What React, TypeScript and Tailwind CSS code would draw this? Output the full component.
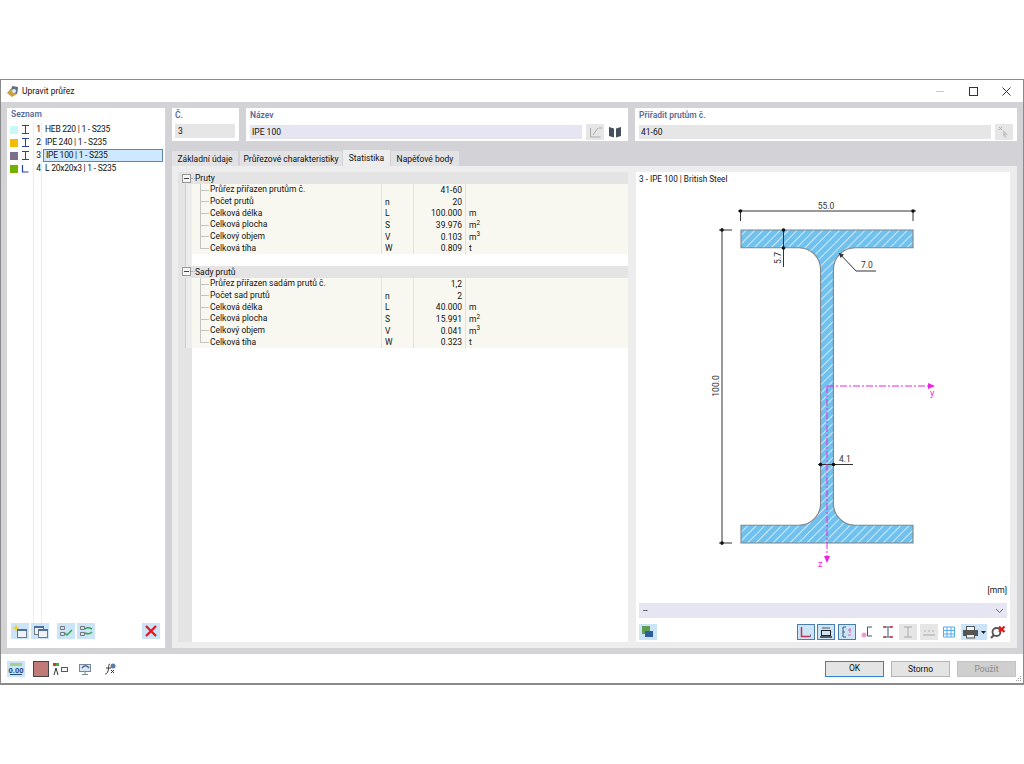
import React from 'react';

const font = { fontFamily: 'Roboto, "Open Sans", sans-serif' };

type Row = { label: string; sym: string; value: string; unit?: React.ReactNode };

const pruty: Row[] = [
  { label: 'Průřez přiřazen prutům č.', sym: '', value: '41-60' },
  { label: 'Počet prutů', sym: 'n', value: '20' },
  { label: 'Celková délka', sym: 'L', value: '100.000', unit: 'm' },
  { label: 'Celková plocha', sym: 'S', value: '39.976', unit: <>m<sup>2</sup></> },
  { label: 'Celkový objem', sym: 'V', value: '0.103', unit: <>m<sup>3</sup></> },
  { label: 'Celková tíha', sym: 'W', value: '0.809', unit: 't' },
];

const sady: Row[] = [
  { label: 'Průřez přiřazen sadám prutů č.', sym: '', value: '1,2' },
  { label: 'Počet sad prutů', sym: 'n', value: '2' },
  { label: 'Celková délka', sym: 'L', value: '40.000', unit: 'm' },
  { label: 'Celková plocha', sym: 'S', value: '15.991', unit: <>m<sup>2</sup></> },
  { label: 'Celkový objem', sym: 'V', value: '0.041', unit: <>m<sup>3</sup></> },
  { label: 'Celková tíha', sym: 'W', value: '0.323', unit: 't' },
];

const sections = [
  { color: 'bg-[#c8f8f8]', type: 'I', n: 1, name: 'HEB 220 | 1 - S235' },
  { color: 'bg-[#f5bb00]', type: 'I', n: 2, name: 'IPE 240 | 1 - S235' },
  { color: 'bg-[#7d6e8c]', type: 'I', n: 3, name: 'IPE 100 | 1 - S235' },
  { color: 'bg-[#74b000]', type: 'L', n: 4, name: 'L 20x20x3 | 1 - S235' },
];

const Glyph = ({ children, w = 18, h = 16 }: { children?: React.ReactNode; w?: number; h?: number }) => (
  <svg width={w} height={h} viewBox={`0 0 ${w} ${h}`} fill="none">{children}</svg>
);

const Btn = ({ children, className = 'bg-[#cce4f7]' }: { children?: React.ReactNode; className?: string }) => (
  <div className={`w-[18px] h-[16px] shrink-0 flex items-center justify-center ${className}`}>{children}</div>
);

const Win = ({ x, y }: { x: number; y: number }) => (
  <>
    <rect x={x + 0.5} y={y + 0.5} width="9" height="8" fill="#eef2f6" stroke="#6f7a86" />
    <rect x={x} y={y} width="10" height="2" fill="#4d6f9c" />
  </>
);

const GroupHeader = ({ title }: { title: string }) => (
  <div className="h-[12px] bg-[#e4e4e4] flex items-center text-[8.5px] leading-none text-[#111]">
    <div className="w-[4px]" />
    <svg width="9" height="9" viewBox="0 0 9 9" className="shrink-0">
      <rect x="0.5" y="0.5" width="8" height="8" fill="#f5f5f5" stroke="#999" />
      <path d="M2 4.5h5" stroke="#444" />
    </svg>
    <div className="w-[4px] border-t border-dotted border-[#aaa]" />
    <span>{title}</span>
  </div>
);

const Rows = ({ rows }: { rows: Row[] }) => (
  <div className="flex">
    <div className="w-[14px] shrink-0 flex">
      <div className="w-[8px] bg-[#e4e4e4] border-r border-[#cfcfcf]" />
      <div className="w-[6px] bg-[#ececec]" />
    </div>
    <div className="flex-1">
      {rows.map((r, i) => (
        <div key={r.label} className="h-[11.67px] flex bg-[#f8f8f1] text-[8.5px] leading-[13px] text-[#111]">
          <div className="w-[190px] shrink-0 flex items-center border-r border-[#e2e2da]">
            <div className="relative w-[18px] h-full shrink-0">
              <div className={`absolute left-[8px] top-0 border-l border-[#c4c4c4] ${i === rows.length - 1 ? 'h-1/2' : 'h-full'}`} />
              <div className="absolute left-[8px] top-1/2 w-[9px] border-t border-[#c4c4c4]" />
            </div>
            <span className="whitespace-nowrap">{r.label}</span>
          </div>
          <div className="w-[32px] shrink-0 pl-[3px] border-r border-[#e2e2da]">{r.sym}</div>
          <div className="w-[52px] shrink-0 text-right pr-[3px] border-r border-[#e2e2da]">{r.value}</div>
          <div className="flex-1 pl-[3px] whitespace-nowrap">{r.unit}</div>
        </div>
      ))}
    </div>
  </div>
);

const Dot = ({ x, y }: { x: number; y: number }) => <circle cx={x} cy={y} r="1.8" fill="#111" />;

const Drawing = () => {
  const outline =
    'M741 230H913V247.8H855.3A21.9 21.9 0 0 0 833.4 269.7V503.3A21.9 21.9 0 0 0 855.3 525.2H913V543H741V525.2H798.7A21.9 21.9 0 0 0 820.6 503.3V269.7A21.9 21.9 0 0 0 798.7 247.8H741Z';
  return (
    <svg width="374" height="410" viewBox="636 186 374 410" fill="none" className="shrink-0">
      <defs>
        <pattern id="hatch" width="6" height="6" patternUnits="userSpaceOnUse" patternTransform="rotate(45)">
          <rect width="6" height="6" fill="#70c1ee" />
          <rect width="1" height="6" fill="#cfeafa" />
        </pattern>
      </defs>
      <path d={outline} fill="url(#hatch)" stroke="#7f8488" strokeWidth="1.1" />
      <g stroke="#333" strokeWidth="1">
        <path d="M738 211H916M740.5 211V221M913 211V221" />
        <path d="M722 228V545M719 230H732M719 543H732" />
        <path d="M783.5 230V267" />
        <path d="M839 253L856 271H876" />
        <path d="M818 464.5H853" />
      </g>
      <path d="M839 253l5 1.5-3.5 3.5z" fill="#333" />
      <Dot x={740.5} y={211} />
      <Dot x={913} y={211} />
      <Dot x={722} y={230} />
      <Dot x={722} y={543} />
      <Dot x={783.5} y={230} />
      <Dot x={783.5} y={248} />
      <Dot x={820.5} y={464.5} />
      <Dot x={833.5} y={464.5} />
      <g stroke="#f020e0" strokeWidth="1" strokeDasharray="7 2 2 2">
        <path d="M827 386H928" />
        <path d="M827 386V556" />
      </g>
      <path d="M935 386l-7-3v6zM827 563l-3-7h6z" fill="#f020e0" />
      <g fill="#333" fontSize="8.5" style={font}>
        <text x="826" y="209" textAnchor="middle">55.0</text>
        <text x="867" y="268" textAnchor="middle">7.0</text>
        <text x="845" y="462" textAnchor="middle">4.1</text>
        <text transform="translate(719 386) rotate(-90)" textAnchor="middle">100.0</text>
        <text transform="translate(781 258) rotate(-90)" textAnchor="middle">5.7</text>
      </g>
      <g fill="#f020e0" fontSize="9" style={font}>
        <text x="930" y="396">y</text>
        <text x="818" y="567">z</text>
      </g>
    </svg>
  );
};

const App: React.FC = () => {
  return (
    <div className="w-[1024px] h-[764px] bg-white pt-[79px] overflow-hidden" style={font}>
      <div className="h-[606px] border border-b-2 border-[#8a8a8a] flex flex-col">
        {/* Title bar */}
        <div className="h-[22px] shrink-0 flex items-center bg-white">
          <svg width="13" height="13" viewBox="0 0 13 13" className="ml-[5px]">
            <path d="M1 8L6 2l6 1-1 6-5 3z" fill="#c9a23a" />
            <path d="M6 1l6 1-1 7-5-2z" fill="#5f6f86" />
            <circle cx="8" cy="6" r="2" fill="#e8edf3" />
          </svg>
          <span className="ml-[3px] text-[8.5px] text-[#111]">Upravit průřez</span>
          <div className="flex-1" />
          <div className="w-[93px] flex items-center">
            <div className="w-[8px] ml-[6px] border-t border-[#c8c8c8]" />
            <div className="w-[9px] h-[9px] ml-[25px] border border-[#333]" />
            <svg width="9" height="9" viewBox="0 0 9 9" className="ml-[24px]">
              <path d="M0.5 0.5l8 8M8.5 0.5l-8 8" stroke="#333" />
            </svg>
          </div>
        </div>

        {/* Body */}
        <div className="h-[552px] shrink-0 bg-[#d2d2d7] flex gap-[7px] pl-[6px] pr-[6px] py-[6px]">
          {/* Seznam */}
          <div className="w-[158px] shrink-0 bg-white flex flex-col text-[8.5px] leading-[13px] text-[#111]">
            <div className="h-[15px] shrink-0 pl-[4px] font-semibold text-[#5a6b98] text-[8.5px]">Seznam</div>
            <div className="h-[500px] shrink-0 flex">
              <div className="w-[26px] shrink-0 pl-[3px]">
                {sections.map(s => (
                  <div key={s.n} className="h-[13px] flex items-center">
                    <div className={`w-[8px] h-[8px] ${s.color}`} />
                    <svg width="12" height="9" viewBox="0 0 12 9" fill="none" className="ml-[2px]">
                      {s.type === 'I' ? (
                        <path d="M2 0.5h7M5.500 0.5v8M2 8.500h7" stroke="#2840a8" />
                      ) : (
                        <path d="M2.500 1v7h6" stroke="#2840a8" strokeWidth="1.200" />
                      )}
                    </svg>
                  </div>
                ))}
              </div>
              <div className="w-[9px] shrink-0 border-x border-[#ececec] text-right">
                {sections.map(s => (
                  <div key={s.n} className="h-[13px]">{s.n}</div>
                ))}
              </div>
              <div className="flex-1 pl-[1px] pr-[2px] tracking-[-0.25px]">
                {sections.map(s => (
                  <div
                    key={s.n}
                    className={`h-[13px] pl-[2px] whitespace-nowrap ${s.n === 3 ? 'bg-[#cde8ff] border border-[#5b87a8] leading-[11px] pl-[1px]' : ''}`}
                  >
                    {s.name}
                  </div>
                ))}
              </div>
            </div>
            <div className="flex pl-[4px] pr-[5px] items-center">
              <Btn>
                <Glyph>
                  <Win x={6} y={6} />
                  <path d="M5 1l1 3 3 1-3 1-1 3-1-3-3-1 3-1z" fill="#f2d021" />
                </Glyph>
              </Btn>
              <div className="w-[2px]" />
              <Btn>
                <Glyph><Win x={3} y={3} /><Win x={7} y={6} /></Glyph>
              </Btn>
              <div className="w-[8px]" />
              <Btn>
                <Glyph>
                  <path d="M3.500 3.500h4v3h-4zM3.500 9.500h4v3h-4z" stroke="#777" />
                  <path d="M8 10l2 2 5-5" stroke="#2fa84f" strokeWidth="1.500" />
                </Glyph>
              </Btn>
              <div className="w-[2px]" />
              <Btn>
                <Glyph>
                  <path d="M3.500 3.500h4v3h-4zM3.500 9.500h4v3h-4z" stroke="#777" />
                  <path d="M8 6c2-2 5-1 7 0M8 10c2 1 5 1 7-1" stroke="#2fa84f" strokeWidth="1.500" />
                </Glyph>
              </Btn>
              <div className="flex-1" />
              <Btn>
                <Glyph><path d="M4 3l10 10M14 3L4 13" stroke="#e8141c" strokeWidth="2.200" /></Glyph>
              </Btn>
            </div>
          </div>

          {/* Main column */}
          <div className="flex-1 flex flex-col min-w-0">
            <div className="h-[33px] shrink-0 flex gap-[7px] text-[8.5px] text-[#111]">
              <div className="w-[67px] bg-white px-[3px] flex flex-col">
                <div className="h-[16px] pt-[1px] leading-[12px] font-semibold text-[#5a6b98]">Č.</div>
                <div className="w-[60px] h-[14px] bg-[#e6e6e6] pl-[3px] leading-[14px]">3</div>
              </div>
              <div className="w-[382px] bg-white px-[4px] flex flex-col">
                <div className="h-[16px] pt-[1px] leading-[12px] font-semibold text-[#5a6b98]">Název</div>
                <div className="flex items-center">
                  <div className="w-[332px] h-[14px] bg-[#e6e6f2] pl-[2px] leading-[14px]">IPE 100</div>
                  <Btn className="ml-[4px] bg-[#e6e6e6] h-[15px]">
                    <Glyph>
                      <path d="M4.500 4v9h10" stroke="#a8a8a8" />
                      <path d="M7 11l5-7M13 4h3" stroke="#a8a8a8" />
                    </Glyph>
                  </Btn>
                  <Btn className="ml-[2px] h-[15px]">
                    <Glyph><path d="M3 3l5 1.500v9L3 12zM15 3l-5 1.500v9l5-1.500z" fill="#44505c" /></Glyph>
                  </Btn>
                </div>
              </div>
              <div className="w-[382px] bg-white px-[4px] flex flex-col">
                <div className="h-[16px] pt-[1px] leading-[12px] font-semibold text-[#5a6b98]">Přiřadit prutům č.</div>
                <div className="flex items-center">
                  <div className="w-[352px] h-[14px] bg-[#e6e6e6] pl-[2px] leading-[14px]">41-60</div>
                  <Btn className="ml-[4px] bg-[#e6e6e6] h-[15px]">
                    <Glyph>
                      <path d="M8 6l5 5-2.500 0 1 2.500-1.500 .5-1-2.500L8 13z" fill="#c4c4c4" />
                      <path d="M4 3l3 3M7 3L4 6" stroke="#aaa" />
                    </Glyph>
                  </Btn>
                </div>
              </div>
            </div>

            {/* Tabs */}
            <div className="h-[16px] mt-[9px] shrink-0 flex items-end text-[8.5px] text-[#111] whitespace-nowrap">
              <div className="w-[66px] h-[15px] bg-[#e2e2e4] text-center leading-[16px]">Základní údaje</div>
              <div className="w-[102px] h-[15px] ml-[2px] bg-[#e2e2e4] text-center leading-[16px]">Průřezové charakteristiky</div>
              <div className="w-[47px] h-[16px] ml-[1px] bg-[#ededed] text-center leading-[17px]">Statistika</div>
              <div className="w-[68px] h-[15px] ml-[1px] bg-[#e2e2e4] text-center leading-[16px]">Napěťové body</div>
            </div>

            <div className="flex-1 bg-[#ededed] p-[6px] flex gap-[8px] min-h-0">
              {/* Tree table */}
              <div className="w-[450px] shrink-0 bg-white flex flex-col">
                <GroupHeader title="Pruty" />
                <Rows rows={pruty} />
                <div className="h-[12px] shrink-0 flex">
                  <div className="w-[8px] bg-[#e4e4e4] border-r border-[#cfcfcf]" />
                  <div className="w-[6px] bg-[#ececec]" />
                </div>
                <GroupHeader title="Sady prutů" />
                <Rows rows={sady} />
                <div className="flex-1 flex">
                  <div className="w-[14px] bg-[#e4e4e4]" />
                </div>
              </div>

              {/* Cross-section preview */}
              <div className="w-[374px] shrink-0 bg-white flex flex-col text-[8.5px] text-[#111]">
                <div className="h-[14px] shrink-0 pl-[3px] leading-[15px] text-[8.2px]">3 - IPE 100 | British Steel</div>
                <div className="h-[410px] shrink-0 relative">
                  <Drawing />
                  <span className="absolute right-[3px] bottom-0 leading-[12px] text-[8.5px]">[mm]</span>
                </div>
                <div className="mx-[3px] mt-[7px] h-[15px] shrink-0 bg-[#e6e6f2] flex items-center justify-between pl-[4px] pr-[3px]">
                  <span>--</span>
                  <svg width="9" height="6" viewBox="0 0 9 6"><path d="M1 1l3.500 3.500L8 1" stroke="#666" fill="none" /></svg>
                </div>
                <div className="mx-[3px] mt-[6px] flex items-center">
                  <Btn>
                    <Glyph>
                      <rect x="3" y="2" width="8" height="8" fill="#5f9e52" />
                      <rect x="6" y="7" width="8" height="6" fill="#2d5f9c" />
                    </Glyph>
                  </Btn>
                  <div className="flex-1" />
                  <Btn className="bg-[#cce4f7] border border-[#4a7ea8]">
                    <Glyph w={16} h={14}><path d="M3.500 2v9.500h9" stroke="#c8344c" strokeWidth="1.500" /><path d="M12.500 9.500v2" stroke="#5a6a9a" /></Glyph>
                  </Btn>
                  <Btn className="ml-[2px] bg-[#cce4f7] border border-[#4a7ea8]">
                    <Glyph w={16} h={14}>
                      <rect x="3.500" y="5.500" width="9" height="5" stroke="#222" />
                      <path d="M5 2v2M7 2v2M9 2v2M11 2v2" stroke="#555" />
                      <path d="M2 12h12" stroke="#222" strokeWidth="1.400" />
                    </Glyph>
                  </Btn>
                  <Btn className="ml-[3px] bg-[#cce4f7] border border-[#4a7ea8]">
                    <Glyph w={16} h={14}><path d="M7 2H4v10h3M4 7h2" stroke="#3a5878" /><path d="M9 5h3M11 3v5M9 10h3" stroke="#d070b0" /></Glyph>
                  </Btn>
                  <Btn className="ml-[3px]">
                    <Glyph><path d="M13 3H8.500v9H13" stroke="#3a5878" /><circle cx="5" cy="11" r="2.500" fill="#e4a0d0" /></Glyph>
                  </Btn>
                  <Btn className="ml-[2px]">
                    <Glyph><path d="M5 3h8M9 3v10M5 13h8" stroke="#3a5878" /><path d="M4 3h3M11 3h3M4 13h3M11 13h3" stroke="#d8344c" strokeWidth="1.400" /></Glyph>
                  </Btn>
                  <Btn className="ml-[2px] bg-[#e6e6e6]">
                    <Glyph><path d="M5 3h8M9 3v10M5 13h8" stroke="#a8a8a8" /></Glyph>
                  </Btn>
                  <Btn className="ml-[3px] bg-[#e6e6e6]">
                    <Glyph><path d="M3 11h12" stroke="#a8a8a8" /><path d="M5 6v2M9 6v2M13 6v2" stroke="#b0b0b0" /></Glyph>
                  </Btn>
                  <Btn className="ml-[2px]">
                    <Glyph><path d="M3.500 3h11v10h-11zM7 3v10M11 3v10M3.500 6.500h11M3.500 10h11" stroke="#58a8ec" /></Glyph>
                  </Btn>
                  <div className="ml-[3px] w-[26px] h-[16px] bg-[#cce4f7] flex items-center">
                    <svg width="26" height="16" viewBox="0 0 26 16" fill="none">
                      <rect x="5.500" y="2.500" width="8" height="4" fill="#f4f4f4" stroke="#555" />
                      <rect x="2" y="6" width="15" height="6" fill="#555" />
                      <rect x="5.500" y="10.500" width="8" height="3.500" fill="#eee" stroke="#555" />
                      <path d="M20 7h5l-2.500 3z" fill="#222" />
                    </svg>
                  </div>
                  <Btn className="ml-[2px]">
                    <Glyph>
                      <circle cx="7.500" cy="8" r="4" stroke="#555" strokeWidth="1.800" />
                      <path d="M5 11l-3 3" stroke="#555" strokeWidth="2.200" />
                      <path d="M10 2.500l5.500 5.500M15.500 2.500L10 8" stroke="#e8141c" strokeWidth="2.200" />
                    </Glyph>
                  </Btn>
                </div>
              </div>
            </div>
          </div>
        </div>

        {/* Footer */}
        <div className="relative flex-1 bg-white flex items-center pl-[6px] pr-[7px] text-[8.5px] text-[#111]">
          <Btn>
            <Glyph>
              <rect x="3" y="2" width="12" height="3" fill="#a4d08c" />
              <text x="9" y="12" textAnchor="middle" fontSize="7.500" fontWeight="700" fill="#2a4a7c">0.00</text>
              <path d="M3 13.500h12" stroke="#2a4a7c" />
            </Glyph>
          </Btn>
          <div className="ml-[8px] w-[16px] h-[16px] bg-[#c07a78] border border-[#444]" />
          <Btn className="ml-[2px]">
            <Glyph>
              <rect x="2" y="2" width="3" height="3" fill="#e03030" /><rect x="5" y="2" width="3" height="3" fill="#40b040" />
              <path d="M3 14l2-7 2 7" stroke="#333" /><rect x="10.500" y="6.500" width="6" height="4" fill="#f4f4f4" stroke="#557" />
            </Glyph>
          </Btn>
          <Btn className="ml-[7px]">
            <Glyph><rect x="3.500" y="3.500" width="11" height="7" fill="#dce6f0" stroke="#7a8794" /><path d="M6 7c2-3 5-3 7 0" stroke="#4a6a9c" strokeWidth="1.500" /><path d="M9 11v2M6 13.500h6" stroke="#7a8794" /></Glyph>
          </Btn>
          <Btn className="ml-[7px]">
            <Glyph><path d="M9 3c-2 0-1 4-2 7s-2 3-3 3" stroke="#333" /><path d="M5 7h5" stroke="#333" /><circle cx="12" cy="5" r="2.500" fill="#5a7aa8" /><path d="M10 9l3 3M13 9l-3 3" stroke="#333" /></Glyph>
          </Btn>
          <div className="flex-1" />
          <div className="w-[59px] h-[16px] bg-[#e4e4e4] border-[1.5px] border-[#2f84d0] text-center leading-[13px]">OK</div>
          <div className="w-[59px] h-[16px] ml-[7px] bg-[#e4e4e4] border border-[#b4b4b4] text-center leading-[14px]">Storno</div>
          <div className="w-[59px] h-[16px] ml-[7px] bg-[#cfcfcf] border border-[#c4c4c4] text-center leading-[14px] text-[#8a8a8a]">Použít</div>
          <svg width="6" height="6" viewBox="0 0 6 6" className="absolute right-[1px] bottom-[1px]">
            <path d="M4 0h1v1H4zM2 2h1v1H2zM4 2h1v1H4zM0 4h1v1H0zM2 4h1v1H2zM4 4h1v1H4z" fill="#a0a0a0" />
          </svg>
        </div>
      </div>
    </div>
  );
};

export default App;
